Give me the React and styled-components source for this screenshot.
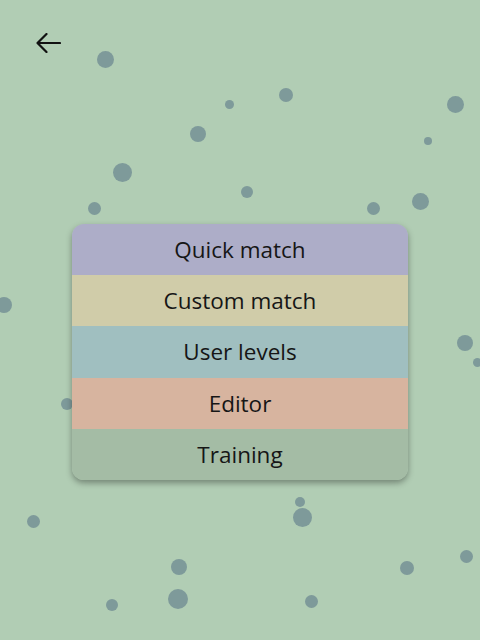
import styled, { createGlobalStyle } from "styled-components";

const GlobalStyle = createGlobalStyle`
  html, body {
    margin: 0;
    padding: 0;
    background: #b1cdb4;
  }
  * {
    box-sizing: border-box;
  }
`;

const Page = styled.div`
  position: relative;
  width: 480px;
  height: 640px;
  overflow: hidden;
  background: #b1cdb4;
  display: flex;
  flex-direction: column;
  font-family: "Open Sans", "Noto Sans", sans-serif;
`;

const DotsLayer = styled.div`
  position: absolute;
  inset: 0;
  pointer-events: none;
`;

const Dot = styled.span`
  position: absolute;
  border-radius: 50%;
  background: #7e9a9a;
`;

const Header = styled.header`
  position: relative;
  z-index: 1;
  padding: 33px 0 0 36px;
  height: 52px;
`;

const BackButton = styled.button`
  display: block;
  padding: 0;
  border: none;
  background: transparent;
  cursor: pointer;
  line-height: 0;
`;

const Menu = styled.nav`
  position: relative;
  z-index: 1;
  width: 336px;
  margin: 172px auto 0;
  border-radius: 12px;
  overflow: hidden;
  box-shadow: 0 3px 6px rgba(0, 0, 0, 0.35);
  display: flex;
  flex-direction: column;
`;

const MenuItem = styled.button`
  height: 51.2px;
  border: none;
  padding: 0;
  margin: 0;
  background: ${(p) => p.$bg};
  color: #161616;
  font-family: inherit;
  font-size: 22.5px;
  display: flex;
  align-items: center;
  justify-content: center;
  cursor: pointer;
`;

const dots = [
  [105, 59, 17], [229, 104, 9], [286, 95, 14], [455, 104, 17],
  [198, 134, 16], [428, 141, 8], [122, 172, 19], [247, 192, 12],
  [94, 208, 13], [373, 208, 13], [420, 201, 17], [4, 305, 16],
  [465, 343, 16], [477, 362, 9], [67, 404, 12], [300, 502, 10],
  [302, 517, 19], [33, 521, 13], [466, 556, 13], [179, 567, 16],
  [407, 568, 14], [178, 599, 20], [112, 605, 12], [311, 601, 13],
];

const items = [
  { label: "Quick match", bg: "#adadc8" },
  { label: "Custom match", bg: "#d0cca9" },
  { label: "User levels", bg: "#a0bfc0" },
  { label: "Editor", bg: "#d7b49f" },
  { label: "Training", bg: "#a4bca5" },
];

function App() {
  return (
    <Page>
      <GlobalStyle />
      <DotsLayer>
        {dots.map(([x, y, d], i) => (
          <Dot
            key={i}
            style={{ left: x - d / 2, top: y - d / 2, width: d, height: d }}
          />
        ))}
      </DotsLayer>
      <Header>
        <BackButton aria-label="Back">
          <svg width="25" height="20" viewBox="0 0 25 20" fill="none">
            <path
              d="M1.5 10H24M10.5 1L1.5 10L10.5 19"
              stroke="#111"
              strokeWidth="2.2"
              strokeLinecap="round"
              strokeLinejoin="round"
            />
          </svg>
        </BackButton>
      </Header>
      <Menu>
        {items.map((it) => (
          <MenuItem key={it.label} $bg={it.bg}>
            {it.label}
          </MenuItem>
        ))}
      </Menu>
    </Page>
  );
}

export default App;
